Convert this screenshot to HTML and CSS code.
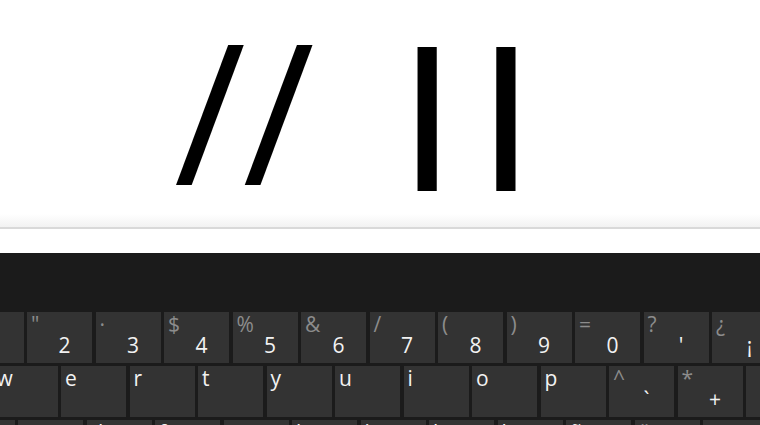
FILE: index.html
```html
<!DOCTYPE html>
<html>
<head>
<meta charset="utf-8">
<link rel="stylesheet" href="styles.css">
</head>
<body>
<div class="screen">
  <div class="canvas">
    <span class="slashes">//</span>
    <span class="bars">||</span>
  </div>
  <div class="field"></div>
  <div class="keyboard">
    <div class="row row1">
      <div class="key"><span class="top">!</span><span class="bottom">1</span></div>
      <div class="key"><span class="top">"</span><span class="bottom">2</span></div>
      <div class="key"><span class="top">·</span><span class="bottom">3</span></div>
      <div class="key"><span class="top">$</span><span class="bottom">4</span></div>
      <div class="key"><span class="top">%</span><span class="bottom">5</span></div>
      <div class="key"><span class="top">&amp;</span><span class="bottom">6</span></div>
      <div class="key"><span class="top">/</span><span class="bottom">7</span></div>
      <div class="key"><span class="top">(</span><span class="bottom">8</span></div>
      <div class="key"><span class="top">)</span><span class="bottom">9</span></div>
      <div class="key"><span class="top">=</span><span class="bottom">0</span></div>
      <div class="key"><span class="top">?</span><span class="bottom">'</span></div>
      <div class="key"><span class="top">¿</span><span class="bottom">¡</span></div>
    </div>
    <div class="row row2">
      <div class="key"><span class="top letter">w</span></div>
      <div class="key"><span class="top letter">e</span></div>
      <div class="key"><span class="top letter">r</span></div>
      <div class="key"><span class="top letter">t</span></div>
      <div class="key"><span class="top letter">y</span></div>
      <div class="key"><span class="top letter">u</span></div>
      <div class="key"><span class="top letter">i</span></div>
      <div class="key"><span class="top letter">o</span></div>
      <div class="key"><span class="top letter">p</span></div>
      <div class="key"><span class="top">^</span><span class="bottom">`</span></div>
      <div class="key"><span class="top">*</span><span class="bottom">+</span></div>
      <div class="key"></div>
    </div>
    <div class="row row3">
      <div class="key"><span class="top letter">a</span></div>
      <div class="key"><span class="top letter">s</span></div>
      <div class="key"><span class="top letter">d</span></div>
      <div class="key"><span class="top letter">f</span></div>
      <div class="key"><span class="top letter">g</span></div>
      <div class="key"><span class="top letter">h</span></div>
      <div class="key"><span class="top letter">j</span></div>
      <div class="key"><span class="top letter">k</span></div>
      <div class="key"><span class="top letter">l</span></div>
      <div class="key"><span class="top letter">ñ</span></div>
      <div class="key"><span class="top">¨</span><span class="bottom">´</span></div>
      <div class="key"><span class="top letter">ç</span></div>
    </div>
  </div>
</div>
</body>
</html>
```
FILE: styles.css
```css
html, body {
  margin: 0;
  padding: 0;
  background: #ffffff;
}
.screen {
  width: 760px;
  height: 425px;
  overflow: hidden;
  display: flex;
  flex-direction: column;
}
.canvas {
  height: 229px;
  flex: none;
  box-sizing: border-box;
  padding-left: 174px;
  display: flex;
  align-items: flex-start;
  background: linear-gradient(to bottom, #ffffff 0, #ffffff 214px, #f2f2f2 227px);
  border-bottom: 2px solid #d9d9d9;
  font-family: "Open Sans", sans-serif;
  color: #000;
}
.slashes {
  font-size: 196px;
  line-height: 196px;
  font-weight: 500;
  margin-top: 11px;
  letter-spacing: -3px;
}
.bars {
  font-size: 147px;
  line-height: 147px;
  font-weight: 800;
  margin-top: 29px;
  margin-left: 78px;
  letter-spacing: 4px;
}
.field {
  height: 24px;
  flex: none;
  background: #ffffff;
}
.keyboard {
  flex: none;
  background: #1b1b1b;
  padding-top: 59px;
  display: flex;
  flex-direction: column;
  gap: 3px;
  font-family: "Open Sans", "Noto Sans", sans-serif;
}
.row {
  display: flex;
  gap: 3.5px;
  flex: none;
}
.row1 { margin-left: -41.5px; }
.row2 { margin-left: -7.5px; }
.row3 { margin-left: -50.5px; }
.key {
  width: 65px;
  height: 51px;
  flex: none;
  background: #333333;
  box-sizing: border-box;
  padding-top: 2px;
  display: flex;
  flex-direction: column;
}
.top {
  display: block;
  height: 21px;
  line-height: 21px;
  font-size: 21px;
  padding-left: 4px;
  color: #8c8c8c;
}
.top.letter {
  color: #f2f2f2;
}
.bottom {
  display: block;
  height: 21px;
  line-height: 21px;
  font-size: 21px;
  text-align: center;
  padding-left: 10px;
  color: #f2f2f2;
}
```
